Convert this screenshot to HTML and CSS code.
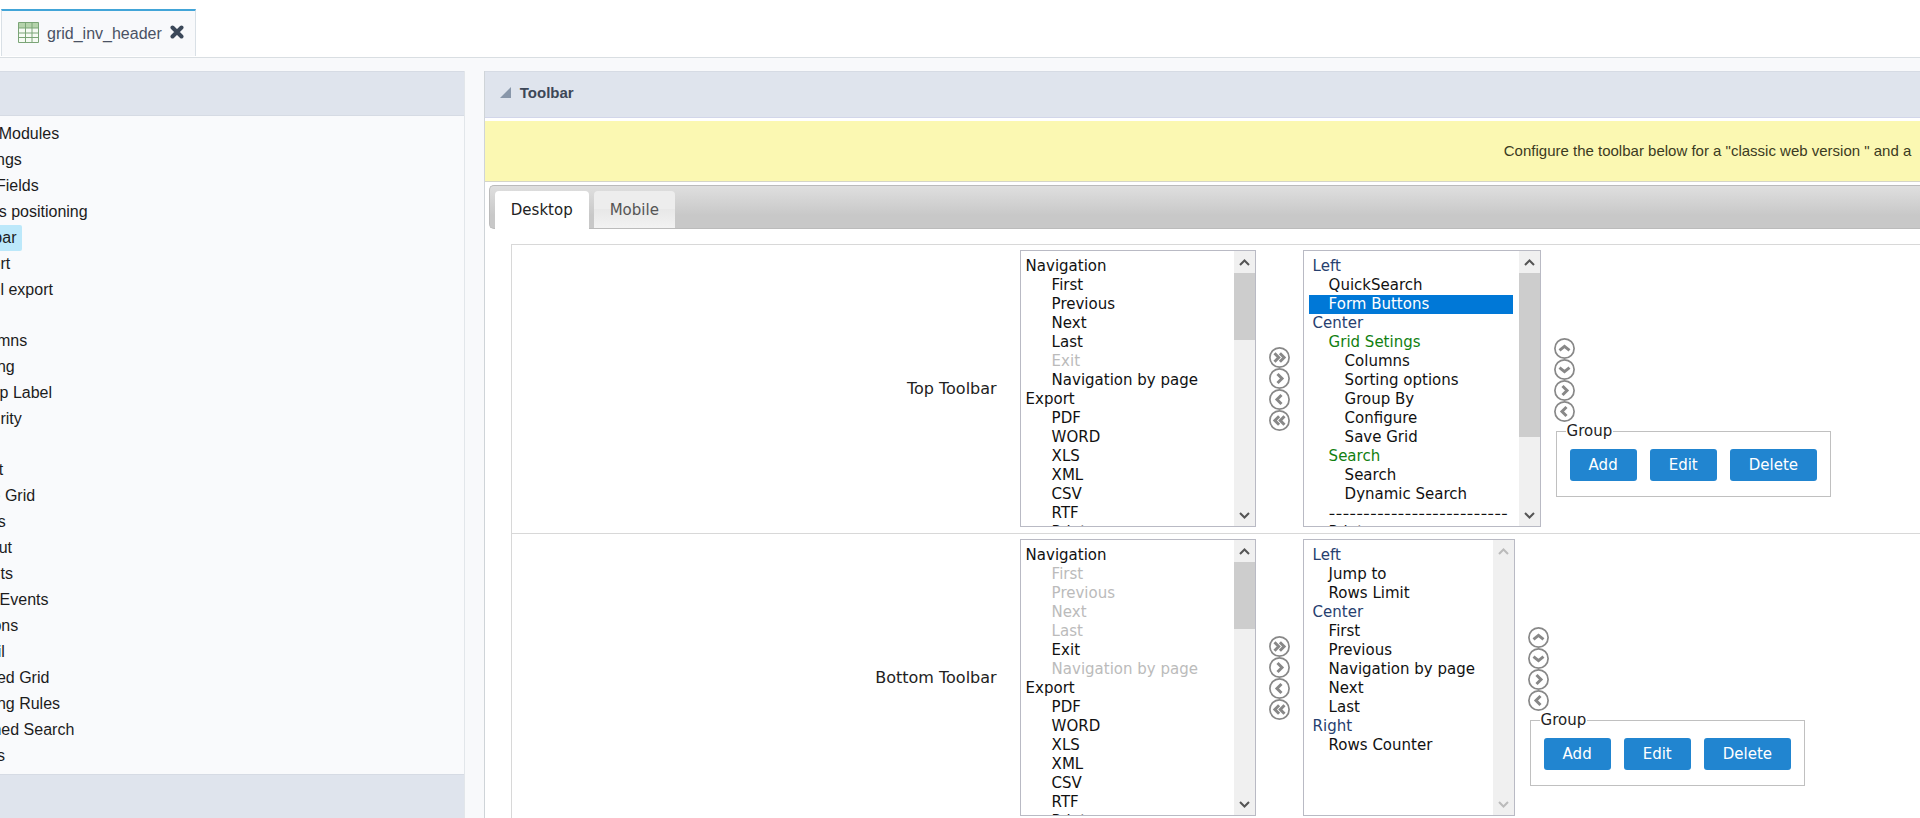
FILE: index.html
```
<!DOCTYPE html>
<html lang="en">
<head>
  <meta charset="UTF-8" />
  <meta name="viewport" content="width=device-width, initial-scale=1" />
  <title>grid_inv_header</title>
  <link rel="stylesheet" href="styles.css">
</head>
<body>
  <!-- shared icons -->
  <svg class="sprite" aria-hidden="true">
    <symbol id="right" viewBox="0 0 21 21"><circle cx="10.5" cy="10.5" r="9.6"/><path d="M8.500 6l4.500 4.500L8.500 15"/></symbol>
    <symbol id="left" viewBox="0 0 21 21"><circle cx="10.5" cy="10.5" r="9.6"/><path d="M12.500 6L8 10.500l4.500 4.500"/></symbol>
    <symbol id="up" viewBox="0 0 21 21"><circle cx="10.5" cy="10.5" r="9.6"/><path d="M5.500 12.300l5-4 5 4"/></symbol>
    <symbol id="down" viewBox="0 0 21 21"><circle cx="10.5" cy="10.5" r="9.6"/><path d="M5.500 8.700l5 4 5-4"/></symbol>
    <symbol id="all-right" viewBox="0 0 21 21"><circle cx="10.5" cy="10.5" r="9.6"/><path d="M5.500 6.300l4.200 4.200-4.200 4.200M10.900 6.300l4.200 4.200-4.200 4.200"/></symbol>
    <symbol id="all-left" viewBox="0 0 21 21"><circle cx="10.5" cy="10.5" r="9.6"/><path d="M10.100 6.300l-4.200 4.200 4.200 4.200M15.500 6.300l-4.200 4.200 4.200 4.200"/></symbol>
    <symbol id="scroll-up" viewBox="0 0 21 22"><path d="M6 14l4.500-4.500L15 14"/></symbol>
    <symbol id="scroll-down" viewBox="0 0 21 22"><path d="M6 9l4.500 4.500L15 9"/></symbol>
  </svg>

  <header class="tabs">
    <div class="file-tab">
      <svg class="grid-icon" viewBox="0 0 21 21" aria-hidden="true">
        <rect x=".5" y=".5" width="20" height="20" fill="#f6fbf4"/>
        <rect x=".5" y=".5" width="20" height="5.500" fill="#b5d3ab"/>
        <path d="M.5.5h20v20H.5zM.5 6h20M.5 11h20M.5 15.500h20M7.500.5v20M14 .5v20" fill="none" stroke="#7ba577"/>
      </svg>
      <span class="file-name">grid_inv_header</span>
      <button class="close" aria-label="Close">
        <svg viewBox="0 0 14 14"><path d="M2.500 2.500l9 9M11.500 2.500l-9 9"/></svg>
      </button>
    </div>
  </header>

  <div class="workspace">
    <aside class="sidebar">
      <div class="side-head"></div>
      <nav class="side-menu">
        <a href="#">Grid Modules</a>
        <a href="#">Settings</a>
        <a href="#">Edit Fields</a>
        <a href="#">Fields positioning</a>
        <a href="#" class="active">Toolbar</a>
        <a href="#">Export</a>
        <a href="#">Email export</a>
        <hr>
        <a href="#">Columns</a>
        <a href="#">Sorting</a>
        <a href="#">Group Label</a>
        <a href="#">Security</a>
        <hr>
        <a href="#">Chart</a>
        <a href="#">Save Grid</a>
        <a href="#">Totals</a>
        <a href="#">Layout</a>
        <a href="#">Events</a>
        <a href="#">Ajax Events</a>
        <a href="#">Buttons</a>
        <a href="#">Detail</a>
        <a href="#">Nested Grid</a>
        <a href="#">Sorting Rules</a>
        <a href="#">Refined Search</a>
        <a href="#">Rules</a>
      </nav>
      <div class="side-head"></div>
    </aside>

    <main class="panel">
      <h1 class="panel-head">
        <svg viewBox="0 0 11 11" aria-hidden="true"><path d="M11 0v11H0z"/></svg>
        Toolbar
      </h1>
      <p class="notice">Configure the toolbar below for a "classic web version " and a</p>

      <div class="view-tabs">
        <button class="view-tab on">Desktop</button>
        <button class="view-tab">Mobile</button>
      </div>

      <div class="settings">
        <div class="row">
          <label class="row-label" for="top-source">Top Toolbar</label>
          <div class="list-box">
            <select class="list" id="top-source" size="14" multiple>
              <option>Navigation</option>
              <option class="sub">First</option>
              <option class="sub">Previous</option>
              <option class="sub">Next</option>
              <option class="sub">Last</option>
              <option class="sub" disabled>Exit</option>
              <option class="sub">Navigation by page</option>
              <option>Export</option>
              <option class="sub">PDF</option>
              <option class="sub">WORD</option>
              <option class="sub">XLS</option>
              <option class="sub">XML</option>
              <option class="sub">CSV</option>
              <option class="sub">RTF</option>
              <option class="sub">Print</option>
            </select>
            <div class="scroll" aria-hidden="true">
              <svg><use href="#scroll-up"/></svg>
              <div class="track"><div class="thumb"></div></div>
              <svg><use href="#scroll-down"/></svg>
            </div>
          </div>
          <div class="moves">
            <button aria-label="Add all"><svg><use href="#all-right"/></svg></button>
            <button aria-label="Add"><svg><use href="#right"/></svg></button>
            <button aria-label="Remove"><svg><use href="#left"/></svg></button>
            <button aria-label="Remove all"><svg><use href="#all-left"/></svg></button>
          </div>
          <div class="list-box wide">
            <select class="list" aria-label="Top Toolbar buttons" size="14" multiple>
              <option class="side">Left</option>
              <option class="item">QuickSearch</option>
              <option class="item" selected>Form Buttons</option>
              <option class="side">Center</option>
              <option class="item group">Grid Setings</option>
              <option class="child">Columns</option>
              <option class="child">Sorting options</option>
              <option class="child">Group By</option>
              <option class="child">Configure</option>
              <option class="child">Save Grid</option>
              <option class="item group">Search</option>
              <option class="child">Search</option>
              <option class="child">Dynamic Search</option>
              <option class="item separator">--------------------------</option>
              <option class="item">Print</option>
            </select>
            <div class="scroll" aria-hidden="true">
              <svg><use href="#scroll-up"/></svg>
              <div class="track"><div class="thumb long"></div></div>
              <svg><use href="#scroll-down"/></svg>
            </div>
          </div>
          <div class="order">
            <div class="moves">
              <button aria-label="Move up"><svg><use href="#up"/></svg></button>
              <button aria-label="Move down"><svg><use href="#down"/></svg></button>
              <button aria-label="Indent"><svg><use href="#right"/></svg></button>
              <button aria-label="Outdent"><svg><use href="#left"/></svg></button>
            </div>
            <fieldset class="group-box">
              <legend>Group</legend>
              <button class="btn">Add</button>
              <button class="btn">Edit</button>
              <button class="btn">Delete</button>
            </fieldset>
          </div>
        </div>

        <div class="row">
          <label class="row-label" for="bottom-source">Bottom Toolbar</label>
          <div class="list-box">
            <select class="list" id="bottom-source" size="14" multiple>
              <option>Navigation</option>
              <option class="sub" disabled>First</option>
              <option class="sub" disabled>Previous</option>
              <option class="sub" disabled>Next</option>
              <option class="sub" disabled>Last</option>
              <option class="sub">Exit</option>
              <option class="sub" disabled>Navigation by page</option>
              <option>Export</option>
              <option class="sub">PDF</option>
              <option class="sub">WORD</option>
              <option class="sub">XLS</option>
              <option class="sub">XML</option>
              <option class="sub">CSV</option>
              <option class="sub">RTF</option>
              <option class="sub">Print</option>
            </select>
            <div class="scroll" aria-hidden="true">
              <svg><use href="#scroll-up"/></svg>
              <div class="track"><div class="thumb"></div></div>
              <svg><use href="#scroll-down"/></svg>
            </div>
          </div>
          <div class="moves">
            <button aria-label="Add all"><svg><use href="#all-right"/></svg></button>
            <button aria-label="Add"><svg><use href="#right"/></svg></button>
            <button aria-label="Remove"><svg><use href="#left"/></svg></button>
            <button aria-label="Remove all"><svg><use href="#all-left"/></svg></button>
          </div>
          <div class="list-box narrow">
            <select class="list" aria-label="Bottom Toolbar buttons" size="14" multiple>
              <option class="side">Left</option>
              <option class="item">Jump to</option>
              <option class="item">Rows Limit</option>
              <option class="side">Center</option>
              <option class="item">First</option>
              <option class="item">Previous</option>
              <option class="item">Navigation by page</option>
              <option class="item">Next</option>
              <option class="item">Last</option>
              <option class="side">Right</option>
              <option class="item">Rows Counter</option>
            </select>
            <div class="scroll idle" aria-hidden="true">
              <svg><use href="#scroll-up"/></svg>
              <div class="track"></div>
              <svg><use href="#scroll-down"/></svg>
            </div>
          </div>
          <div class="order">
            <div class="moves">
              <button aria-label="Move up"><svg><use href="#up"/></svg></button>
              <button aria-label="Move down"><svg><use href="#down"/></svg></button>
              <button aria-label="Indent"><svg><use href="#right"/></svg></button>
              <button aria-label="Outdent"><svg><use href="#left"/></svg></button>
            </div>
            <fieldset class="group-box">
              <legend>Group</legend>
              <button class="btn">Add</button>
              <button class="btn">Edit</button>
              <button class="btn">Delete</button>
            </fieldset>
          </div>
        </div>
      </div>
    </main>
  </div>
</body>
</html>
```
FILE: styles.css
```
* { box-sizing: border-box; margin: 0; padding: 0; }
body {
  height: 100vh;
  overflow: hidden;
  display: flex; flex-direction: column;
  background: #f8f9fb;
  color: #222;
  font: 16px "Liberation Sans", Arial, sans-serif;
}
button, select { font: inherit; }
button { border: none; background: none; cursor: pointer; }
.sprite { display: none; }

/* open files */
.tabs {
  flex: none;
  height: 58px; padding: 9px 1px 2px;
  background: #fff;
  border-bottom: 1px solid #d9dee2;
}
.file-tab {
  display: inline-flex; align-items: center; gap: 8px;
  height: 47px; padding: 0 11px 3px 16px;
  background: #f8f9fb;
  border: 1px solid #d9e0e6; border-top: 2px solid #42a5d8; border-bottom: none;
  color: #4a5264;
}
.file-name { padding-top: 4px; }
.grid-icon { width: 21px; height: 21px; }
.close, .close svg { display: block; width: 14px; height: 14px; }
.close path { stroke: #3b4859; stroke-width: 4; stroke-linecap: round; }

.workspace { flex: 1; min-height: 0; display: flex; gap: 19px; padding-top: 13px; }

/* left menu, partly scrolled out of the window */
.sidebar {
  flex: none;
  width: 29%; margin-left: -92px;
  border-right: 1px solid #e2e6ea;
  background: #f9fafc;
}
.side-head {
  height: 45px;
  background: #dfe4ed;
  border-top: 1px solid #d6dbe4; border-bottom: 1px solid #d6dbe4;
}
.side-menu {
  display: flex; flex-direction: column; align-items: flex-start;
  padding: 5px 0 5px 50px;
}
.side-menu a {
  padding: 0 6px;
  border-radius: 2px;
  line-height: 26px;
  color: #1c1c1c; text-decoration: none;
}
.side-menu a.active { background: #bce8fa; }
.side-menu hr { height: 25px; border: none; }

/* main panel */
.panel {
  flex: 1; min-width: 0;
  background: #fff;
  border-left: 1px solid #cfd4d8;
}
.panel-head {
  display: flex; align-items: center; gap: 9px;
  height: 47px; padding: 0 15px 5px;
  background: #dfe4ed;
  border-top: 1px solid #d6dbe4; border-bottom: 1px solid #d2d6ea;
  color: #3d4757;
  font-size: 15px;
}
.panel-head svg { width: 11px; height: 11px; fill: #8997aa; }
.notice {
  margin-top: 3px; padding-left: 71%;
  background: #fbf8b2;
  border-bottom: 1px solid #d5d5c8;
  color: #3b3b22;
  font-size: 15px;
  line-height: 60px;
  white-space: nowrap;
}

.view-tabs, .settings { font: 15px "DejaVu Sans", Verdana, sans-serif; }
.view-tabs {
  display: flex; gap: 5px;
  height: 44px; margin: 3px 0 0 4px; padding: 5px 5px 0;
  border: 1px solid #bbb; border-right: none; border-radius: 5px 0 0 5px;
  background: linear-gradient(#dfdfdf, #c8c8c8 70%);
}
.view-tab {
  height: 37px; padding: 0 16px;
  border-radius: 4px 4px 0 0;
  background: linear-gradient(#ededed 50%, #e8e8e8 50%, #f2f2f2);
  color: #555;
}
.view-tab.on { height: 38px; background: #fff; color: #222; }

.settings {
  margin: 15px 0 0 26px;
  border-left: 1px solid #d8d8d8;
}
.row {
  display: flex; align-items: center; gap: 13px;
  padding: 5px 0 6px 3px;
  border-top: 1px solid #d8d8d8;
}
.row-label { width: 35%; padding-right: 10px; font-size: 16px; text-align: right; }

/* option lists */
.list-box { position: relative; flex: none; width: 236px; }
.list-box.wide { width: 238px; }
.list-box.narrow { width: 212px; }
.list {
  display: block;
  width: 100%; height: 277px; padding: 6px 27px 6px 5px;
  border: 1px solid #b9bac4; border-radius: 0;
  background: #fff;
  color: #111;
  outline: none;
  overflow-y: scroll;
  scrollbar-width: none;
}
.list option { padding: 0; min-height: 19px; line-height: 19px; }
.list option:disabled { color: #bbb; }
.list option:checked { background: #0078d7 linear-gradient(#0078d7, #0078d7); color: #fff; }
.list .sub { padding-left: 26px; }
.list .side { padding-left: 4px; color: #27406f; }
.list .item { padding-left: 20px; }
.list .child { padding-left: 36px; }
.list .group { color: #118011; }
.list .separator { font-family: Inter, sans-serif; }

.scroll {
  position: absolute; top: 1px; right: 1px; bottom: 1px;
  display: flex; flex-direction: column;
  width: 21px;
  background: #f0f0f0;
  pointer-events: none;
}
.scroll svg { flex: none; width: 21px; height: 22px; fill: none; stroke: #555; stroke-width: 2; }
.scroll.idle svg { stroke: #bbb; }
.track { flex: 1; }
.thumb { height: 29%; background: #cdcdcd; }
.thumb.long { height: 71%; }

.moves { display: flex; flex-direction: column; }
.moves button, .moves svg { display: block; width: 21px; height: 21px; }
.moves svg { fill: none; stroke: #888; stroke-width: 3; }
.sprite circle { stroke-width: 1.7; }

.order { align-self: flex-end; margin-bottom: 30px; }
.group-box {
  display: flex; gap: 13px;
  margin: 0 2px; padding: 9px 13px 15px;
  border: 1px solid #c0c0c0;
}
.group-box legend { margin-left: -4px; padding: 0 1px; }
.btn {
  height: 32px; padding: 0 19px;
  border-radius: 3px;
  background: #2185d0;
  color: #fff;
}
```
